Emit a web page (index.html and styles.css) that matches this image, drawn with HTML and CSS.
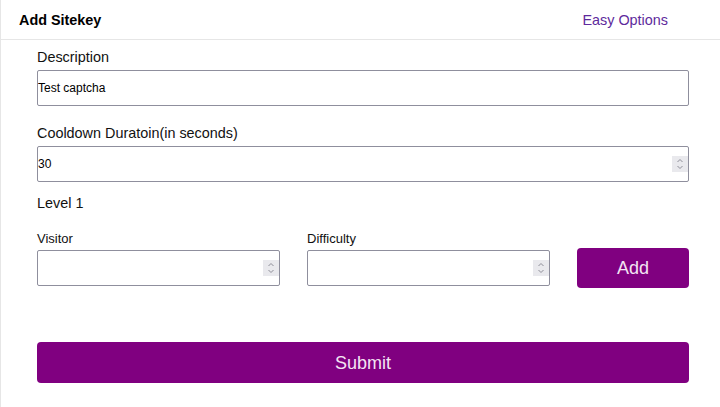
FILE: index.html
```html
<!DOCTYPE html>
<html>
<head>
<meta charset="utf-8">
<link rel="stylesheet" href="styles.css">
</head>
<body>
<div class="panel">
  <header class="head">
    <span class="title">Add Sitekey</span>
    <a class="easy">Easy Options</a>
  </header>
  <form class="form">
    <label class="lbl" for="d">Description</label>
    <input class="field" id="d" type="text" value="Test captcha">
    <label class="lbl gap" for="c">Cooldown Duratoin(in seconds)</label>
    <div class="num">
      <input class="field" id="c" type="number" value="30">
      <span class="spin"><svg width="16" height="16" viewBox="0 0 16 16"><path d="M5.5 6 L8 3.5 L10.5 6 M5.5 10 L8 12.5 L10.5 10" fill="none" stroke="#8e8e98" stroke-width="1"/></svg></span>
    </div>
    <div class="level">Level 1</div>
    <div class="row">
      <div class="col">
        <label class="small" for="v">Visitor</label>
        <div class="num">
          <input class="field" id="v" type="number">
          <span class="spin"><svg width="16" height="16" viewBox="0 0 16 16"><path d="M5.5 6 L8 3.5 L10.5 6 M5.5 10 L8 12.5 L10.5 10" fill="none" stroke="#8e8e98" stroke-width="1"/></svg></span>
        </div>
      </div>
      <div class="col">
        <label class="small" for="f">Difficulty</label>
        <div class="num">
          <input class="field" id="f" type="number">
          <span class="spin"><svg width="16" height="16" viewBox="0 0 16 16"><path d="M5.5 6 L8 3.5 L10.5 6 M5.5 10 L8 12.5 L10.5 10" fill="none" stroke="#8e8e98" stroke-width="1"/></svg></span>
        </div>
      </div>
      <button type="button" class="btn add">Add</button>
    </div>
    <button type="button" class="btn submit">Submit</button>
  </form>
</div>
</body>
</html>
```
FILE: styles.css
```css
html, body {
  margin: 0;
  padding: 0;
  background: #fff;
}
body {
  font-family: "Liberation Sans", Arial, sans-serif;
  color: #111;
}
.panel {
  border-left: 1px solid #e6e6e6;
  min-height: 407px;
  box-sizing: border-box;
}
.head {
  height: 39px;
  border-bottom: 1px solid #e6e6e6;
  display: flex;
  align-items: center;
  justify-content: space-between;
  padding: 0 52px 0 18px;
}
.title {
  font-weight: bold;
  font-size: 14.4px;
  color: #000;
}
.easy {
  font-size: 14.4px;
  color: #5e2a9c;
}
.form {
  padding: 8px 31px 0 36px;
  display: flex;
  flex-direction: column;
}
.lbl {
  display: block;
  font-size: 14.4px;
  line-height: 18px;
  margin-bottom: 4px;
  color: #111;
}
.lbl.gap {
  margin-top: 18px;
}
.num {
  position: relative;
}
.field {
  box-sizing: border-box;
  height: 36px;
  width: 100%;
  border: 1px solid #8f8f9d;
  border-radius: 2px;
  padding: 1px 2px 1px 0;
  font-family: "Liberation Sans", Arial, sans-serif;
  font-size: 12px;
  color: #000;
  margin: 0;
  display: block;
  -moz-appearance: textfield;
}
.field::-webkit-inner-spin-button,
.field::-webkit-outer-spin-button {
  -webkit-appearance: none;
  margin: 0;
}
.spin {
  position: absolute;
  right: 1px;
  top: 10px;
  width: 16px;
  height: 16px;
  background: #e9e9ed;
  display: block;
}
.spin svg {
  display: block;
}
.level {
  margin-top: 12px;
  font-size: 14.4px;
  line-height: 18px;
}
.row {
  margin-top: 19px;
  display: grid;
  grid-template-columns: 243px 243px 112px;
  column-gap: 27px;
  align-items: end;
}
.col {
  display: flex;
  flex-direction: column;
}
.small {
  font-size: 13px;
  line-height: 15px;
  margin-bottom: 4px;
}
.btn {
  border: none;
  border-radius: 4px;
  background: #800080;
  color: #f3e4f3;
  font-family: "Liberation Sans", Arial, sans-serif;
  font-size: 18px;
  cursor: pointer;
}
.add {
  height: 40px;
  margin-bottom: -2px;
  padding-top: 2px;
}
.submit {
  margin-top: 56px;
  height: 41px;
  width: 100%;
  padding-top: 3px;
}
```
